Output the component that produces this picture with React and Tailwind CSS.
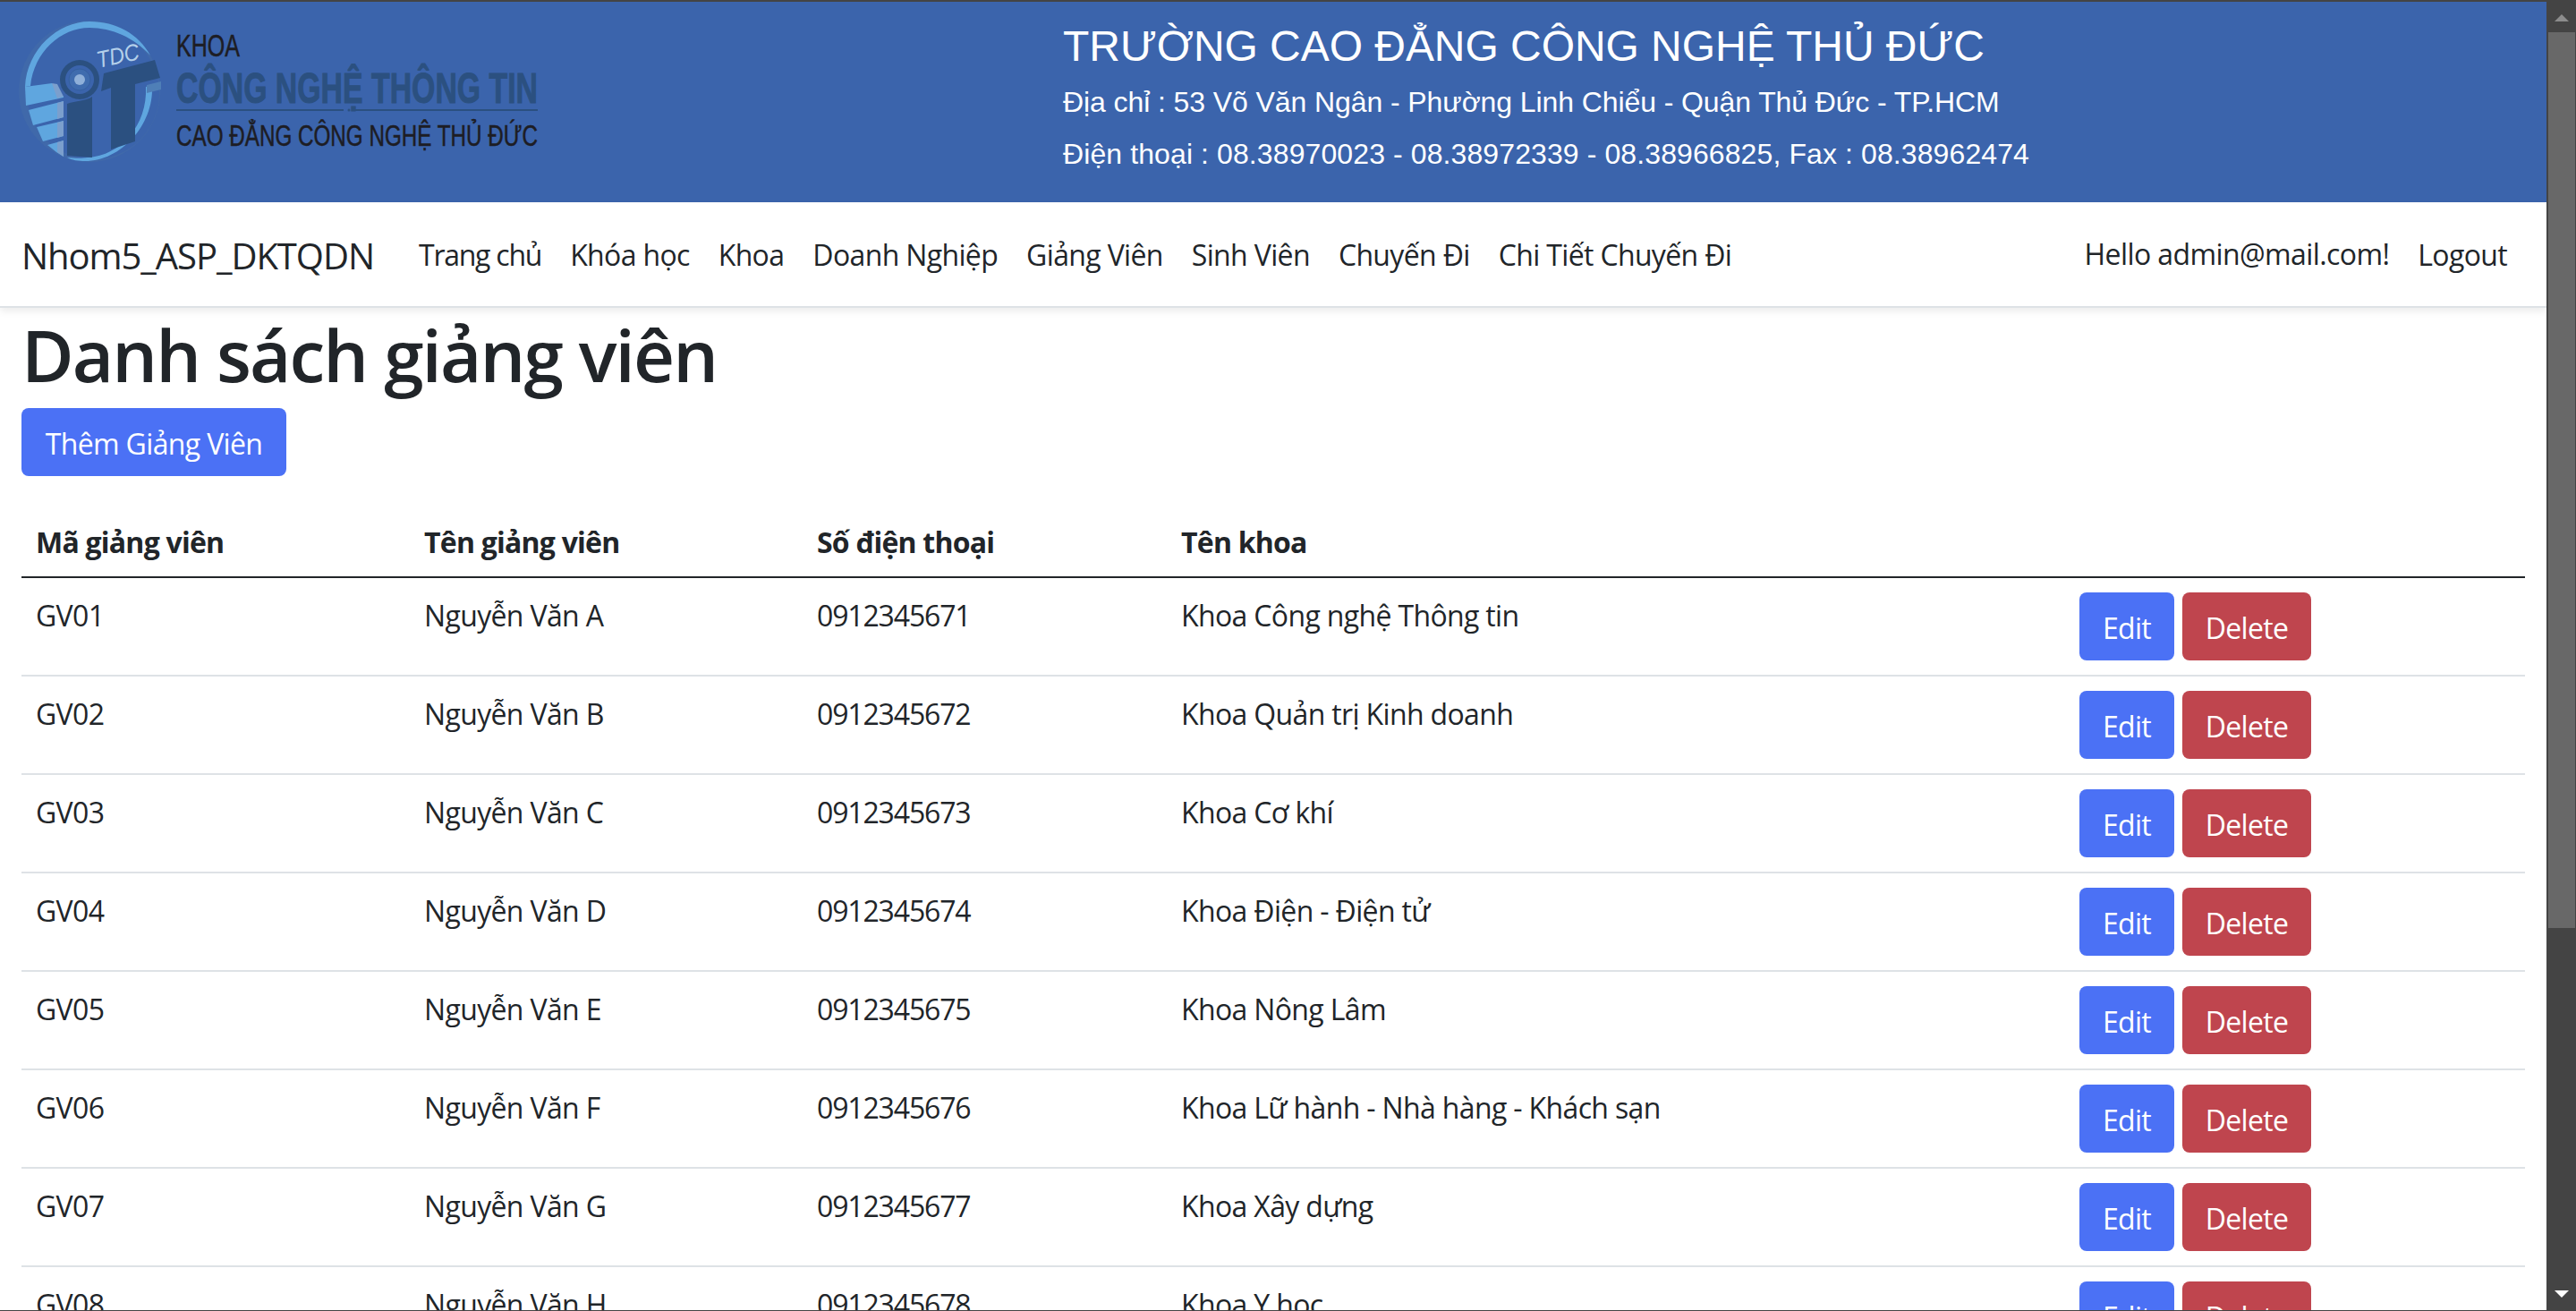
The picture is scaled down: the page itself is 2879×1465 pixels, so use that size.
import React from 'react';

const rows = [
  ['GV01', 'Nguyễn Văn A', '0912345671', 'Khoa Công nghệ Thông tin'],
  ['GV02', 'Nguyễn Văn B', '0912345672', 'Khoa Quản trị Kinh doanh'],
  ['GV03', 'Nguyễn Văn C', '0912345673', 'Khoa Cơ khí'],
  ['GV04', 'Nguyễn Văn D', '0912345674', 'Khoa Điện - Điện tử'],
  ['GV05', 'Nguyễn Văn E', '0912345675', 'Khoa Nông Lâm'],
  ['GV06', 'Nguyễn Văn F', '0912345676', 'Khoa Lữ hành - Nhà hàng - Khách sạn'],
  ['GV07', 'Nguyễn Văn G', '0912345677', 'Khoa Xây dựng'],
  ['GV08', 'Nguyễn Văn H', '0912345678', 'Khoa Y học'],
];

const links = ['Trang chủ', 'Khóa học', 'Khoa', 'Doanh Nghiệp', 'Giảng Viên', 'Sinh Viên', 'Chuyến Đi', 'Chi Tiết Chuyến Đi'];

function Logo() {
  return (
    <svg width="640" height="224" viewBox="0 2 640 224" className="block shrink-0">
      <circle cx="100" cy="102" r="79" fill="#4069aa" />
      <circle cx="104" cy="104" r="74" fill="#3b64ac" />
      <path d="M28 97C30 55 65 24 100 24C130 24 155 38 168 62C150 42 125 31 100 31C68 31 38 58 34 96Z" fill="#5fa6df" />
      <path d="M163 97L170 96C172 140 135 180 95 180C88 180 80 179 75 176C85 177 92 177 98 176C135 174 165 140 163 97Z" fill="#5fa6df" />
      <polygon points="28,97 58,93 71,108 71,109 29,118" fill="#5fa6df" />
      <polygon points="32,123 71,113 71,131 37,140" fill="#5fa6df" />
      <polygon points="41,142 71,135 71,152 48,158" fill="#5fa6df" />
      <polygon points="53,162 71,157 71,175 63,170" fill="#5fa6df" />
      <polygon points="58,93 64,94 71,108 64,110" fill="#7b9fcd" />
      <polygon points="64,115 71,113 71,131 64,133" fill="#7b9fcd" />
      <polygon points="64,137 71,135 71,152 64,154" fill="#7b9fcd" />
      <polygon points="64,159 71,157 71,175 64,170" fill="#7b9fcd" />
      <polygon points="164,95 180,91 180,100 164,104" fill="#4f7fb7" />
      <path d="M75 116C82 113 96 113 103 108L103 176L75 174Z" fill="#2b5080" />
      <circle cx="89" cy="89" r="22" fill="#2b5080" />
      <circle cx="89" cy="89" r="16" fill="#3b64ac" />
      <circle cx="89" cy="89" r="12" fill="#3f6cae" stroke="#3560a0" strokeWidth="1" />
      <circle cx="89" cy="89" r="6" fill="#8fb0d9" />
      <polygon points="116,82 173,67 179,87 151,94 151,158 124,167 124,98 113,102" fill="#2b5080" />
      <text x="0" y="0" transform="translate(110 76) rotate(-12)" fontFamily="'Liberation Sans', sans-serif" fontStyle="italic" fontSize="26" textLength="48" lengthAdjust="spacingAndGlyphs" fill="#b4d0ea">TDC</text>
      <g fontFamily="'Liberation Sans', sans-serif">
        <text x="197" y="63" fontSize="35" textLength="71" lengthAdjust="spacingAndGlyphs" fill="#1d1d24" stroke="#1d1d24" strokeWidth="0.5">KHOA</text>
        <text x="197" y="115" fontSize="49" fontWeight="700" textLength="404" lengthAdjust="spacingAndGlyphs" fill="#2b5080" stroke="#2b5080" strokeWidth="1">CÔNG NGHỆ THÔNG TIN</text>
        <text x="197" y="163" fontSize="33" textLength="404" lengthAdjust="spacingAndGlyphs" fill="#1d1d24" stroke="#1d1d24" strokeWidth="0.5">CAO ĐẲNG CÔNG NGHỆ THỦ ĐỨC</text>
      </g>
      <rect x="197" y="122" width="187" height="2" fill="#2b5080" />
      <rect x="396" y="122" width="205" height="2" fill="#2b5080" />
      <circle cx="390" cy="123" r="1.5" fill="#2b5080" />
    </svg>
  );
}

function Btn({ className, children }) {
  return (
    <button className={'flex h-[76px] items-center justify-center rounded-lg pt-[3px] text-white ' + className}>{children}</button>
  );
}

function Scrollbar() {
  return (
    <div className="flex w-[33px] shrink-0 flex-col bg-[#444444]">
      <div className="flex h-[34px] shrink-0 justify-center pt-[14px]">
        <svg width="16" height="8" viewBox="0 0 16 8" className="block"><polygon points="8,0 16,8 0,8" fill="#8c8c8c" /></svg>
      </div>
      <div className="ml-[2px] h-[1001px] w-[30px] shrink-0 bg-[#686868]" />
      <div className="flex flex-1 items-end justify-center pb-[14px]">
        <svg width="16" height="8" viewBox="0 0 16 8" className="block"><polygon points="0,0 16,0 8,8" fill="#ffffff" /></svg>
      </div>
    </div>
  );
}

export default function App() {
  return (
    <div className="flex h-[1465px] w-full flex-col overflow-hidden border-t-2 border-b border-[#444444] bg-white font-['Open_Sans',sans-serif] text-[32px] leading-[48px] tracking-[-0.65px] text-[#212529]">
      <div className="flex min-h-0 flex-1">
        <div className="min-w-0 flex-1 overflow-hidden">
          <header className="flex h-[224px] bg-[#3b64ac] font-['Liberation_Sans',sans-serif] tracking-normal text-white">
            <div className="w-[1188px] shrink-0"><Logo /></div>
            <div className="pt-[21px]">
              <div className="whitespace-nowrap text-[48px] leading-[58px] tracking-[-0.05px]">TRƯỜNG CAO ĐẲNG CÔNG NGHỆ THỦ ĐỨC</div>
              <div className="mt-[9px] whitespace-nowrap tracking-[-0.09px]">Địa chỉ : 53 Võ Văn Ngân - Phường Linh Chiểu - Quận Thủ Đức - TP.HCM</div>
              <div className="mt-[10px] whitespace-nowrap tracking-[0.1px]">Điện thoại : 08.38970023 - 08.38972339 - 08.38966825, Fax : 08.38962474</div>
            </div>
          </header>
          <nav className="relative z-10 flex h-[118px] items-center border-b-2 border-[#dee2e6] bg-white pl-6 pr-[28px] pt-[2px] shadow-[0_4px_8px_rgba(0,0,0,0.075)]">
            <a className="w-[428px] shrink-0 pt-[2px] text-[40px] tracking-[-1.05px]">Nhom5_ASP_DKTQDN</a>
            <div className="flex">
              {links.map((l, i) => (
                <a key={l} className={i === 0 ? 'whitespace-nowrap px-4 tracking-[-1.25px]' : 'whitespace-nowrap px-4'}>{l}</a>
              ))}
            </div>
            <div className="ml-auto flex items-center">
              <a className="mb-[2px] whitespace-nowrap px-4 tracking-[-0.6px]">Hello admin@mail.com!</a>
              <a className="whitespace-nowrap px-4">Logout</a>
            </div>
          </nav>
          <main className="px-6">
            <h1 className="mb-3 pt-1 text-[80px] font-semibold leading-[96px] tracking-[-1.9px]">Danh sách giảng viên</h1>
            <Btn className="mb-8 w-[296px] bg-[#4b71f5]">Thêm Giảng Viên</Btn>
            <table className="w-full table-fixed border-separate border-spacing-0 text-left">
              <colgroup>
                <col className="w-[434px]" />
                <col className="w-[439px]" />
                <col className="w-[407px]" />
                <col className="w-[1004px]" />
                <col />
              </colgroup>
              <thead>
                <tr>
                  {['Mã giảng viên', 'Tên giảng viên', 'Số điện thoại', 'Tên khoa', ''].map((h, i) => (
                    <th key={i} className="border-b-2 border-[#212529] px-4 pb-[14px] pt-[18px] font-bold tracking-[-0.77px]">{h}</th>
                  ))}
                </tr>
              </thead>
              <tbody>
                {rows.map((r) => (
                  <tr key={r[0]}>
                    {r.map((c, i) => (
                      <td key={i} className={i === 2 ? 'border-b-2 border-[#dee2e6] px-4 pb-[14px] pt-[18px] align-top tracking-[-1.15px]' : 'border-b-2 border-[#dee2e6] px-4 pb-[14px] pt-[18px] align-top'}>{c}</td>
                    ))}
                    <td className="border-b-2 border-[#dee2e6] p-4 align-top">
                      <div className="flex gap-[9px]">
                        <Btn className="w-[106px] bg-[#4b71f5]">Edit</Btn>
                        <Btn className="w-[144px] bg-[#bf454e]">Delete</Btn>
                      </div>
                    </td>
                  </tr>
                ))}
              </tbody>
            </table>
          </main>
        </div>
        <Scrollbar />
      </div>
    </div>
  );
}
